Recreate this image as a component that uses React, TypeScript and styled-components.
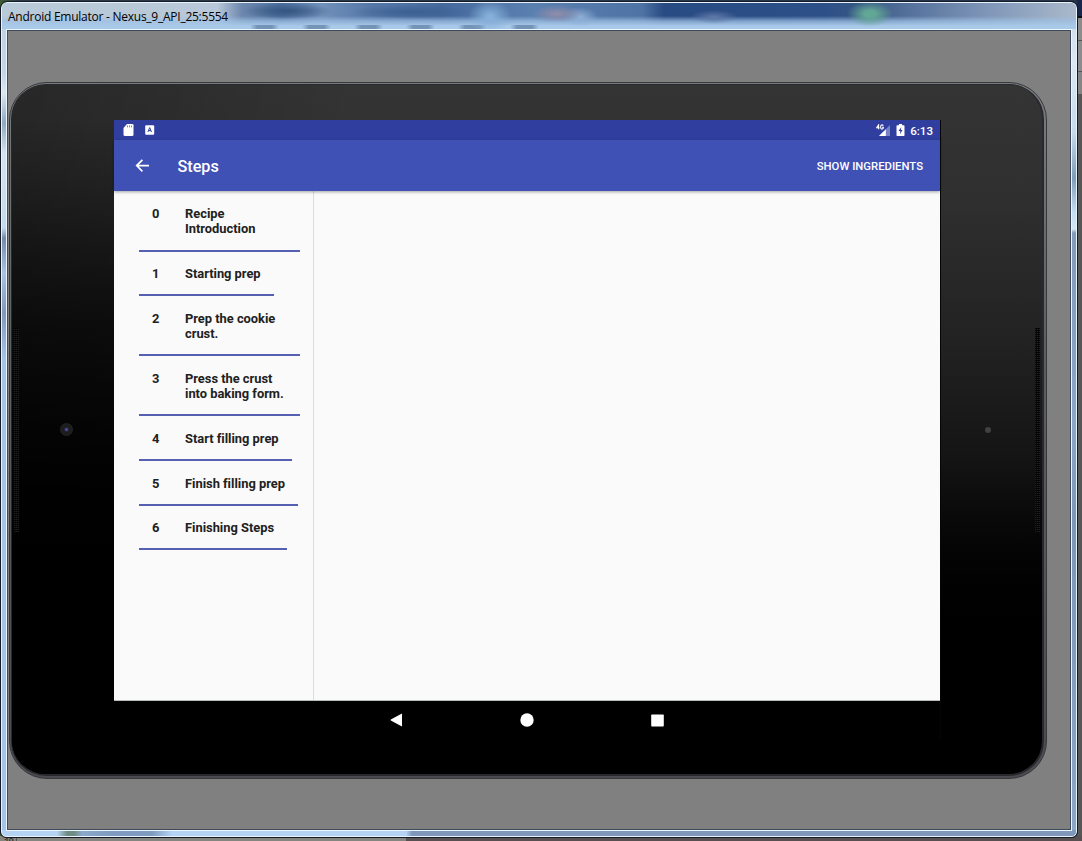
import React from "react";
import styled, { createGlobalStyle } from "styled-components";

const Global = createGlobalStyle`
  * { box-sizing: border-box; }
  html, body { margin: 0; padding: 0; overflow: hidden; }
  body { font-family: Roboto, "Liberation Sans", sans-serif; }
`;

const Desktop = styled.div`
  width: 1082px;
  height: 841px;
  padding-top: 1px;
  overflow: hidden;
  background:
    linear-gradient(#17264a 0 16px, #0a0d14 16px 18px, #8b8b8b 18px 40px, #555 40px 41px, #8b8b8b 41px 71px, #555 71px 72px, #858585 72px 94px, #565656 94px 836px, transparent 836px) right top / 5px 100% no-repeat,
    linear-gradient(90deg, #85857f 0 16px, #555 16px 17px, #85857f 17px 406px, #574f50 406px) left bottom / 100% 5px no-repeat,
    linear-gradient(90deg, #3f5a34 0, #2b3a48 20px, #26344c 100%);
`;

const EditorGutter = styled.div`
  height: 3px;
  padding-left: 4px;
  overflow: hidden;
  color: #222;
  font: 9px/9px "Liberation Mono", monospace;
  letter-spacing: -1px;
`;

const Window = styled.section`
  width: 1078px;
  height: 837px;
  border: 1px solid #141b26;
  border-radius: 7px 7px 6px 6px;
  overflow: hidden;
`;

const Glass = styled.div`
  height: 835px;
  border: 1px solid #e9f3fb;
  border-radius: 6px 6px 5px 5px;
  padding: 0 4px 5px 4px;
  overflow: hidden;
  background:
    linear-gradient(90deg, transparent 55px, #6f8c84 65px 72px, #8ba9cb 80px, #7f9cc0 110px 150px, transparent 170px) left bottom / 100% 5px no-repeat,
    linear-gradient(90deg, #b5d3f3 0 404px, #7f97b8 410px 100%) left bottom / 100% 6px no-repeat,
    linear-gradient(#c9d8e8 0, #dce8f3 60px, #c5daeb 130px, #7f9db8 175px, #c4ddf2 210px, #d5e6f5 226px, #829bb9 230px, #8ba6c7 420px, #7c98b6 520px, #8ca6c6 100%) right top / 5px 100% no-repeat,
    linear-gradient(#bfd0df 0, #c3d5e8 70px, #dce7f0 90px, #8fa9bf 120px, #d4e3ef 150px, #c4d9ec 225px, #7689a9 235px, #a9c3e2 270px, #8298b9 310px, #a5c3e9 355px, #a5c3e9 100%);
`;

const TitleBar = styled.header`
  height: 26px;
  margin: 0 -4px;
  padding: 1px 0 0 6px;
  display: flex;
  align-items: center;
  color: #000;
  font: 12px/20px "Open Sans", "Noto Sans", sans-serif;
  background:
    radial-gradient(ellipse 23px 13px at 868px 11px, #62a695 0 25%, transparent 100%),
    radial-gradient(ellipse 25px 9px at 555px 11px, #8d8caa 0 10%, transparent 100%),
    radial-gradient(ellipse 22px 17px at 488px 14px, #86b0da 0 10%, transparent 100%),
    radial-gradient(ellipse 18px 10px at 578px 14px, #8fb0d8 0, transparent 100%),
    radial-gradient(ellipse 24px 7px at 712px 14px, #5f78a8 0, transparent 100%),
    radial-gradient(ellipse 45px 8px at 285px 8px, #34557f 0, transparent 100%),
    radial-gradient(ellipse 60px 7px at 410px 9px, #3b5f90 0, transparent 100%),
    repeating-linear-gradient(90deg, transparent 0 18px, #52719699 25px 40px, transparent 47px 52px) 230px 22px / 310px 4px no-repeat,
    linear-gradient(transparent 13px, #9ec0e3bb 18px, #a9c9e9 23px),
    linear-gradient(90deg, #b9cad8 0, #b8c8d8 215px, #6d88ae 240px, #4d6f9f 280px, #7191ba 320px, #5577a8 370px, #46699d 440px, #5a80b0 530px, #4f73a4 640px, #294b83 662px, #2d5089 820px, #365783 860px, #57739d 910px, #8198b9 990px, #aab9cb 1074px);
`;

const TitleText = styled.h1`
  margin: 0;
  font: inherit;
  white-space: nowrap;
  letter-spacing: -0.25px;
`;

const Client = styled.main`
  height: 800px;
  margin: 1px;
  padding: 51px 0 0 1px;
  border: 1px solid #3d4a5c;
  outline: 1px solid #edf6fd;
  background: #808080;
`;

const Tablet = styled.div`
  width: 1038px;
  height: 697px;
  padding: 1px 2px 2px 1px;
  border: 1px solid #37373c;
  border-radius: 38px;
  background: linear-gradient(#777c7f, #5a6061 40%, #4c4a51 100%);
`;

const TabletBody = styled.div`
  height: 100%;
  border: solid #29292d;
  border-width: 1px 2px 2px 1px;
  border-radius: 35px;
  overflow: hidden;
  display: flex;
  background:
    linear-gradient(transparent 0, transparent 55%, #000 82%),
    linear-gradient(100deg, rgba(0, 0, 0, 0.25) 0, transparent 30%),
    linear-gradient(#343434 0, #303030 15%, #222 37%, #161616 52%, #000 78%);
`;

const Bezel = styled.aside<{ $side: "left" | "right" }>`
  width: ${(p) => (p.$side === "left" ? "102px" : "101px")};
  flex: none;
  display: flex;
  align-items: center;
  flex-direction: ${(p) => (p.$side === "left" ? "row" : "row-reverse")};
  background: ${(p) =>
    p.$side === "left"
      ? "linear-gradient(transparent 5%, rgba(0,0,0,.6) 35%, rgba(0,0,0,.85) 55%, #000 70%)"
      : "none"};
`;

const Speaker = styled.div`
  width: 5px;
  height: 204px;
  margin: 0 2px;
  background:
    repeating-linear-gradient(90deg, transparent 0 1px, #0008 1px 2px),
    repeating-linear-gradient(#060606 0 1px, #202020 1px 2px);
`;

const Camera = styled.div`
  width: 13px;
  height: 13px;
  margin-left: 39px;
  border-radius: 50%;
  background: radial-gradient(circle, #4b4b90 0 1px, #24243c 2px, #1c1c1e 3px, #202020 6px);
`;

const Sensor = styled.div`
  width: 6px;
  height: 6px;
  margin-right: 42px;
  border-radius: 50%;
  background: #414141;
`;

const Display = styled.div`
  flex: 1;
  height: 620px;
  margin-top: 35px;
  display: flex;
  flex-direction: column;
  border-right: 1px solid #050505;
  background: #000;
`;

const StatusBar = styled.div`
  height: 20px;
  padding: 0 7px 0 9px;
  display: flex;
  align-items: center;
  background: #303f9f;
  color: #fff;
  font-size: 11.6px;
  font-weight: 500;
  svg { display: block; flex: none; }
`;

const StatusGroup = styled.div<{ $gap: number }>`
  display: flex;
  align-items: center;
  gap: ${(p) => p.$gap}px;
`;

const Spacer = styled.div`
  flex: 1;
`;

const Clock = styled.span`
  line-height: 20px;
  padding-top: 1px;
  margin-left: -1px;
`;

const AppBar = styled.div`
  height: 51px;
  flex: none;
  padding: 0 17px 0 21px;
  display: flex;
  align-items: center;
  color: #fff;
  background: #3f51b5;
  box-shadow: 0 1px 3px rgba(0, 0, 0, 0.35);
  z-index: 1;
`;

const AppTitle = styled.h2`
  margin: 1px 0 0 27.5px;
  flex: 1;
  font-size: 16.2px;
  font-weight: 500;
`;

const BarAction = styled.button`
  padding: 2px 0 0;
  border: 0;
  background: none;
  color: #fff;
  font: 500 11.3px Roboto, sans-serif;
  white-space: nowrap;
`;

const Panes = styled.div`
  height: 510px;
  flex: none;
  display: flex;
  background: #fafafa;
  border-bottom: 1px solid #b7bdbb;
`;

const StepList = styled.ol`
  width: 200px;
  margin: 0;
  padding: 0.7px 13px 0 25px;
  list-style: none;
  border-right: 1px solid #dcdcdc;
  display: flex;
  flex-direction: column;
  align-items: flex-start;
`;

const StepRow = styled.li`
  display: flex;
  padding: 14.6px 13px 12.95px 13px;
  border-bottom: 2px solid #5660b3;
  color: #212121;
  font-size: 12.9px;
  line-height: 15.2px;
  font-weight: 700;
`;

const StepNumber = styled.span`
  width: 33px;
  flex: none;
`;

const StepName = styled.span`
  letter-spacing: -0.02px;
`;

const NavBar = styled.nav`
  height: 38px;
  padding-right: 1px;
  display: flex;
  justify-content: center;
  align-items: center;
  gap: 117px;
  svg { display: block; }
`;

const steps = [
  "Recipe Introduction",
  "Starting prep",
  "Prep the cookie crust.",
  "Press the crust into baking form.",
  "Start filling prep",
  "Finish filling prep",
  "Finishing Steps",
];

export default function App() {
  return (
    <>
      <Global />
      <Desktop>
        <Window>
          <Glass>
            <TitleBar>
              <TitleText>Android Emulator - Nexus_9_API_25:5554</TitleText>
            </TitleBar>
            <Client>
              <Tablet>
                <TabletBody>
                  <Bezel $side="left">
                    <Speaker />
                    <Camera />
                  </Bezel>
                  <Display>
                    <StatusBar>
                      <StatusGroup $gap={11}>
                        <svg width="11" height="12" viewBox="0 0 11 12">
                          <path d="M4 0H9Q10.5 0 10.5 1.3V10.7Q10.5 12 9 12H2Q.5 12 .5 10.7V4Z" fill="#fff" />
                          <path d="M4.5 1.5V3.3M6.5 1.5V3.3M8.5 1.5V3.3" stroke="#303f9f" strokeWidth=".7" />
                        </svg>
                        <svg width="10" height="10" viewBox="0 0 10 10">
                          <rect x=".2" y=".2" width="9" height="9.6" rx="1" fill="#fff" />
                          <path d="M2.9 7 4.7 2.6 6.5 7M3.5 5.6H5.9" fill="none" stroke="#303f9f" strokeWidth="1" />
                        </svg>
                      </StatusGroup>
                      <Spacer />
                      <StatusGroup $gap={6}>
                        <svg width="14" height="12" viewBox="0 0 14 12">
                          <path d="M14 1V12H3Z" fill="#7782c3" />
                          <path d="M9.8 5.2V12H3Z" fill="#fff" />
                          <path d="M2.6 5.2V.8L.6 3.8H3.5M7.3 1.6Q6.8.9 6 .9 4.6.9 4.6 3T6 5.1Q7.4 5.1 7.4 3.3H6.1" fill="none" stroke="#fff" strokeWidth="1.1" />
                        </svg>
                        <svg width="9" height="12" viewBox="0 0 9 12">
                          <path d="M2.9 0H6.1V1.2H7.7Q8.5 1.2 8.5 2V11.2Q8.5 12 7.7 12H1.3Q.5 12 .5 11.2V2Q.5 1.2 1.3 1.2H2.9Z" fill="#fff" />
                          <path d="M5.3 3 2.5 7H4.3L3.9 10.2 6.6 6.1H4.9Z" fill="#303f9f" />
                        </svg>
                        <Clock>6:13</Clock>
                      </StatusGroup>
                    </StatusBar>
                    <AppBar>
                      <svg width="15" height="14" viewBox="0 0 15 14">
                        <path d="M14 6.6H2M7.4 .9 1.7 6.6 7.4 12.3" fill="none" stroke="#fff" strokeWidth="1.7" />
                      </svg>
                      <AppTitle>Steps</AppTitle>
                      <BarAction>SHOW INGREDIENTS</BarAction>
                    </AppBar>
                    <Panes>
                      <StepList>
                        {steps.map((name, i) => (
                          <StepRow key={name}>
                            <StepNumber>{i}</StepNumber>
                            <StepName>{name}</StepName>
                          </StepRow>
                        ))}
                      </StepList>
                    </Panes>
                    <NavBar>
                      <svg width="13" height="14" viewBox="0 0 13 14">
                        <path d="M12 .4V13.6L.8 7.5Q.3 7 .8 6.5Z" fill="#fff" />
                      </svg>
                      <svg width="14" height="14" viewBox="0 0 14 14">
                        <circle cx="7" cy="7" r="6.7" fill="#fff" />
                      </svg>
                      <svg width="13" height="13" viewBox="0 0 13 13">
                        <rect x=".2" y=".4" width="12.6" height="12.2" rx=".8" fill="#fff" />
                      </svg>
                    </NavBar>
                  </Display>
                  <Bezel $side="right">
                    <Speaker />
                    <Sensor />
                  </Bezel>
                </TabletBody>
              </Tablet>
            </Client>
          </Glass>
        </Window>
        <EditorGutter>19</EditorGutter>
      </Desktop>
    </>
  );
}
